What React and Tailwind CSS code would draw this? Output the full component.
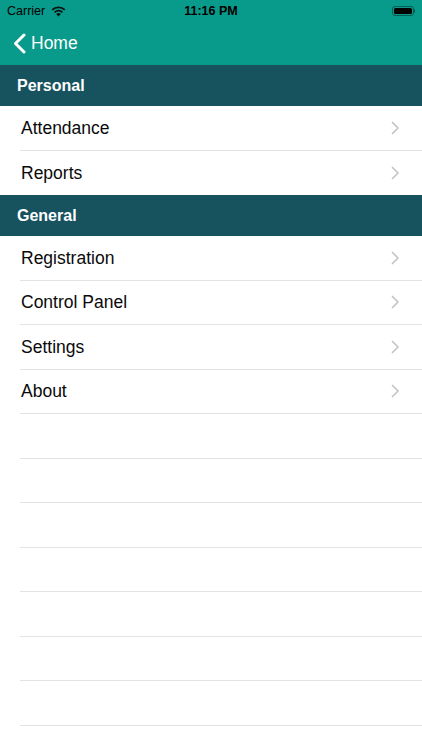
import React from "react";

const Chevron = () => (
  <svg width="9" height="14" viewBox="0 0 9 14" className="shrink-0">
    <path d="M1.5 1.5 L7 7 L1.5 12.5" fill="none" stroke="#c4c4c8" strokeWidth="1.7" strokeLinecap="round" strokeLinejoin="round" />
  </svg>
);

const Row = ({ label, last }) => (
  <div className="h-[44.5px] pl-[20px] flex">
    <div className={last ? "flex-1 flex items-center justify-between pr-[22px]" : "flex-1 flex items-center justify-between pr-[22px] border-b border-[#e2e2e4]"}>
      <span className="pl-[1px] text-[17.5px] text-[#0a0a0a]">{label}</span>
      <Chevron />
    </div>
  </div>
);

const Empty = () => (
  <div className="h-[44.5px] pl-[20px] flex">
    <div className="flex-1 border-b border-[#e2e2e4]" />
  </div>
);

const Header = ({ label }) => (
  <div className="h-[41px] bg-[#17525f] flex items-center pl-[17px]">
    <span className="text-[16px] font-bold text-white">{label}</span>
  </div>
);

export default function App() {
  return (
    <div className="w-[422px] h-[750px] overflow-hidden bg-white" style={{ fontFamily: '"Liberation Sans", Arial, sans-serif' }}>
      <div className="bg-[#089a8a] h-[65px] flex flex-col">
        <div className="h-[22px] relative flex items-center px-[7px]">
          <span className="text-[12.5px] text-black">Carrier</span>
          <svg width="15" height="11" viewBox="0 0 15 11" className="ml-[6px]">
            <path d="M7.5 10.5 L5.2 8 A3.3 3.3 0 0 1 9.8 8 Z" fill="#111" />
            <path d="M3.6 6.3 A5.6 5.6 0 0 1 11.4 6.3" fill="none" stroke="#111" strokeWidth="1.8" />
            <path d="M1.2 3.9 A9 9 0 0 1 13.8 3.9" fill="none" stroke="#111" strokeWidth="1.8" />
          </svg>
          <span className="absolute left-0 right-0 text-center text-[12.5px] font-bold text-black">11:16 PM</span>
          <div className="ml-auto flex items-center">
            <div className="w-[22px] h-[10px] rounded-[3px] border border-black/40 p-[1px]">
              <div className="w-full h-full bg-black rounded-[1.5px]" />
            </div>
            <div className="w-[1.5px] h-[4px] bg-black/40 rounded-r-sm" />
          </div>
        </div>
        <div className="flex-1 flex items-center pl-[13px]">
          <svg width="13" height="21" viewBox="0 0 13 21">
            <path d="M11 2 L2.5 10.5 L11 19" fill="none" stroke="white" strokeWidth="3" strokeLinecap="round" strokeLinejoin="round" />
          </svg>
          <span className="ml-[5px] text-[17.5px] text-white">Home</span>
        </div>
      </div>
      <Header label="Personal" />
      <Row label="Attendance" />
      <Row label="Reports" last />
      <Header label="General" />
      <Row label="Registration" />
      <Row label="Control Panel" />
      <Row label="Settings" />
      <Row label="About" />
      <Empty />
      <Empty />
      <Empty />
      <Empty />
      <Empty />
      <Empty />
      <Empty />
      <Empty />
    </div>
  );
}
